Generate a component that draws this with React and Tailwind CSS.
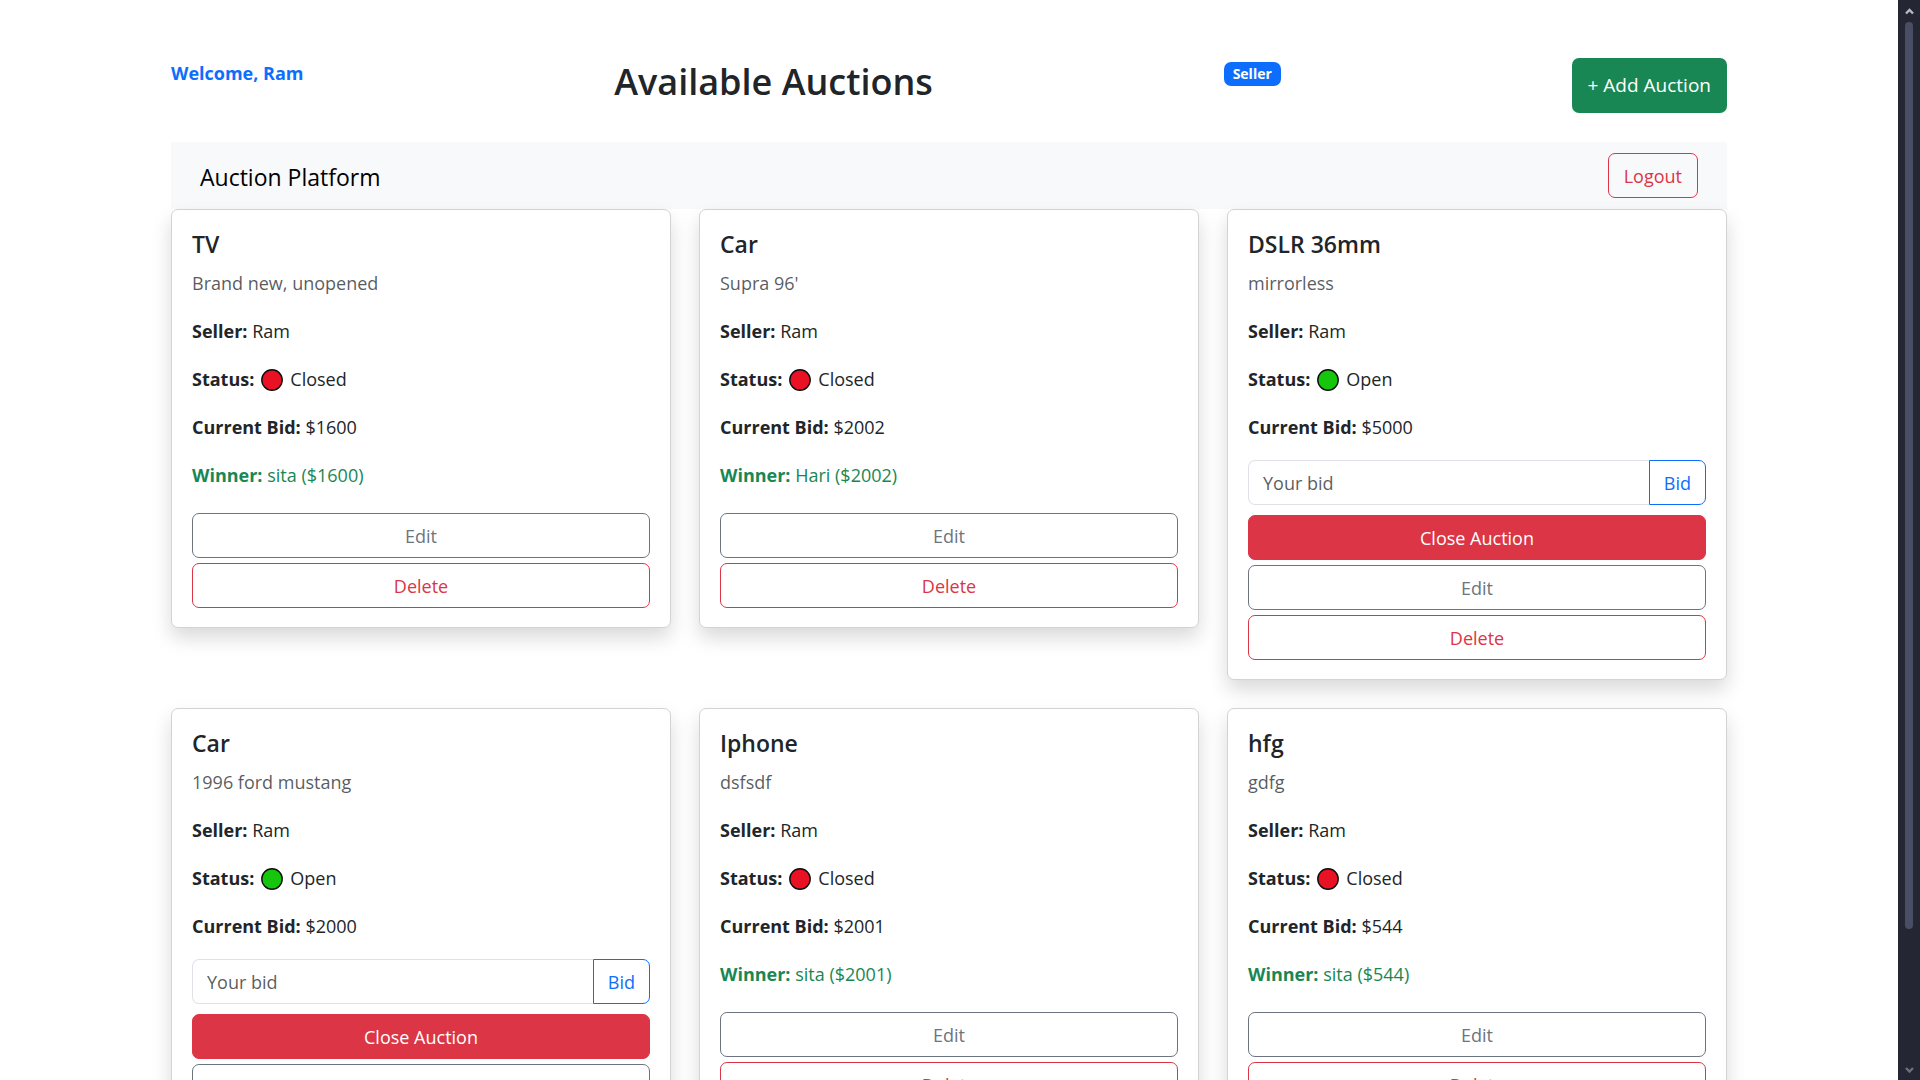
const auctions = [
  { title: "TV", description: "Brand new, unopened", bid: 1600, winner: "sita" },
  { title: "Car", description: "Supra 96'", bid: 2002, winner: "Hari" },
  { title: "DSLR 36mm", description: "mirrorless", bid: 5000 },
  { title: "Car", description: "1996 ford mustang", bid: 2000 },
  { title: "Iphone", description: "dsfsdf", bid: 2001, winner: "sita" },
  { title: "hfg", description: "gdfg", bid: 544, winner: "sita" },
];

function StatusDot({ open }) {
  return (
    <svg viewBox="0 0 22 22" className="mx-[7px] size-[22px]" aria-hidden="true">
      <circle cx="11" cy="11" r="10.2" fill={open ? "#16c60c" : "#e81224"} stroke="#0b0b0b" strokeWidth="1.4" />
    </svg>
  );
}

function Button({ className, children }) {
  return (
    <button type="button" className={`rounded-[7px] border px-[15px] pt-2 pb-1.5 text-center ${className}`}>
      {children}
    </button>
  );
}

function AuctionCard({ auction }) {
  const { title, description, bid, winner } = auction;
  const open = !winner;
  return (
    <article className="rounded-[7px] border border-[#d2d3d4] bg-white px-5 pt-5 pb-[19px] shadow-[0_10px_19px_rgba(0,0,0,0.15)]">
      <h2 className="mb-2.5 text-[23px] leading-[29px] font-semibold">{title}</h2>
      <p className="mb-[19px] text-[#212529]/75">{description}</p>
      <p className="mb-[19px]">
        <strong>Seller:</strong> Ram
      </p>
      <p className="mb-[19px] flex items-center">
        <strong>Status:</strong>
        <StatusDot open={open} />
        {open ? "Open" : "Closed"}
      </p>
      <p className={open ? "mb-[18px]" : "mb-[19px]"}>
        <strong>Current Bid:</strong> ${bid}
      </p>
      {winner ? (
        <p className="mb-[23px] text-[#198754]">
          <strong>Winner:</strong> {winner} (${bid})
        </p>
      ) : (
        <form className="mb-2.5 flex">
          <input
            type="text"
            aria-label="Your bid"
            placeholder="Your bid"
            className="min-w-0 flex-1 rounded-l-[7px] border border-r-0 border-[#dee2e6] px-[14px] pt-2 pb-1.5 placeholder:text-[#212529]/75"
          />
          <button type="button" className="rounded-r-[7px] border border-[#0d6efd] px-[14px] pt-2 pb-1.5 text-[#0d6efd]">
            Bid
          </button>
        </form>
      )}
      <div className="flex flex-col gap-[5px]">
        {open && <Button className="border-[#dc3545] bg-[#dc3545] text-white">Close Auction</Button>}
        <Button className="border-[#6c757d] text-[#6c757d]">Edit</Button>
        <Button className="border-[#dc3545] text-[#dc3545]">Delete</Button>
      </div>
    </article>
  );
}

function ScrollTrack() {
  return (
    <div className="flex w-[22px] shrink-0 flex-col items-center bg-[#242733]" aria-hidden="true">
      <svg viewBox="0 0 22 22" className="size-[22px]">
        <path d="M8 13.5 11.5 10 15 13.5" fill="none" stroke="#b9bac0" strokeWidth="2.4" />
      </svg>
      <div className="w-2 grow-[7] rounded-full bg-[#4a4e65]" />
      <div className="grow-[1]" />
      <svg viewBox="0 0 22 22" className="size-[22px]">
        <path d="M8 10 11.5 13.5 15 10" fill="none" stroke="#6e7078" strokeWidth="2.4" />
      </svg>
    </div>
  );
}

export default function App() {
  return (
    <div className="flex h-screen overflow-hidden bg-white font-['Open_Sans','Noto_Sans',sans-serif] text-[18px] leading-[29px] text-[#212529]">
      <div className="min-w-0 flex-1 overflow-hidden">
        <main className="mx-auto w-full max-w-[1584px] px-[14px] pt-[58px]">
          <header className="mb-[29px] flex items-start justify-between">
            <p className="mr-5 leading-[31px] font-bold text-[#0d6efd]">Welcome, Ram</p>
            <h1 className="text-[36px] leading-[48px] font-semibold">Available Auctions</h1>
            <span className="mt-1 rounded-[7px] bg-[#0d6efd] px-[9px] text-[14px] leading-[24px] font-bold text-white">
              Seller
            </span>
            <button type="button" className="rounded-[7px] bg-[#198754] px-4 py-[13px] text-[19px] text-white">
              + Add Auction
            </button>
          </header>
          <nav className="flex items-center justify-between bg-[#f8f9fa] px-[29px] py-[11px]">
            <a href="#" className="pt-1 text-[23px] text-black">
              Auction Platform
            </a>
            <Button className="border-[#dc3545] text-[#dc3545]">Logout</Button>
          </nav>
          <section className="grid grid-cols-3 items-start gap-7">
            {auctions.map((auction, index) => (
              <AuctionCard key={index} auction={auction} />
            ))}
          </section>
        </main>
      </div>
      <ScrollTrack />
    </div>
  );
}
